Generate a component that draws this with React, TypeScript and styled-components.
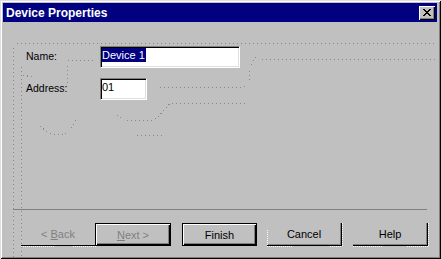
import React from 'react'
import styled, { createGlobalStyle } from 'styled-components'

const GlobalStyle = createGlobalStyle`
  html, body {
    margin: 0;
    padding: 0;
    background: #c0c0c0;
  }
  body {
    font-family: "Liberation Sans", Arial, sans-serif;
  }
`

export default function App () {
  return (
    <>
      <GlobalStyle />
      <Window>
        <TitleBar>
          <Title>Device Properties</Title>
          <CloseButton aria-label='Close'>
            <CloseGlyph />
          </CloseButton>
        </TitleBar>

        <Body>
          <FieldLabel>Name:</FieldLabel>
          <TextBox width={140}>
            <Selected>Device 1</Selected>
          </TextBox>
          <FieldLabel>Address:</FieldLabel>
          <TextBox width={47}>01</TextBox>
        </Body>

        <Separator />

        <ButtonRow>
          <Button look='flat' width={74} disabled>
            <Caption>&lt; <u>B</u>ack</Caption>
          </Button>
          <Button look='framed' width={76} gap={11} disabled>
            <Caption><u>N</u>ext &gt;</Caption>
          </Button>
          <Button look='framed' width={75} gap={10}>
            <Caption>Finish</Caption>
          </Button>
          <Button look='edge' width={75} gap={11}>
            <Caption>Cancel</Caption>
          </Button>
          <Button look='edge' width={75}>
            <Caption>Help</Caption>
          </Button>
        </ButtonRow>

        <Dots />
      </Window>
    </>
  )
}

const CloseGlyph = () => (
  <svg width='8' height='7' viewBox='0 0 8 7' shapeRendering='crispEdges'>
    <path
      fill='#000'
      d='M0 0h2v1H0zM6 0h2v1H6zM1 1h2v1H1zM5 1h2v1H5zM2 2h4v1H2zM3 3h2v1H3zM2 4h4v1H2zM1 5h2v1H1zM5 5h2v1H5zM0 6h2v1H0zM6 6h2v1H6z'
    />
  </svg>
)

// stray focus-dot traces left over in the capture
const greyTraces = [
  'M17 43.5 H434',
  'M13.5 48 V259',
  'M21.5 67 V259',
  'M23 75 L32 77',
  'M67.5 66 V84',
  'M68 60.5 H96',
  'M262 59.5 H437',
  'M256 57 L253 61 L249 70 L249 80 L245 86 L240 87.5 H158',
  'M40 126 Q48 134 58 135 Q70 135 76 120',
  'M117 115 L125 120.5 H153 L158 117 L170 103.5 H245',
  'M137 135.5 H162'
]

const whiteTraces = [
  'M21 246.5 H55',
  'M73 246.5 H97',
  'M267 246.5 H293',
  'M330 246.5 H342',
  'M353 246.5 H383',
  'M407 246.5 H429',
  'M267.5 230 V246',
  'M342.5 223 V246',
  'M428.5 223 V246'
]

const Dots = () => (
  <Overlay width='441' height='259' viewBox='0 0 441 259'>
    {greyTraces.map(d => (
      <path key={d} d={d} fill='none' stroke='#8a8a8a' strokeWidth='1' strokeDasharray='1 3' />
    ))}
    {whiteTraces.map(d => (
      <path key={d} d={d} fill='none' stroke='#ffffff' strokeWidth='1' strokeDasharray='1 1' />
    ))}
  </Overlay>
)

type ButtonLook = 'flat' | 'framed' | 'edge'

const looks: Record<ButtonLook, string> = {
  flat: `
    border-bottom: 1px solid #000;
  `,
  framed: `
    border: 1px solid #000;
    box-shadow: inset 1px 1px #fff, inset -1px -1px #000, inset -2px -2px #808080;
  `,
  edge: `
    border-right: 1px solid #000;
    border-bottom: 1px solid #000;
    box-shadow: inset -1px -1px #808080;
  `
}

const Window = styled.div`
  position: relative;
  box-sizing: border-box;
  width: 441px;
  height: 259px;
  padding: 3px;
  background: #c0c0c0;
  box-shadow:
    inset 1px 1px #dfdfdf,
    inset -1px -1px #000,
    inset 2px 2px #fff,
    inset -2px -2px #808080;
  display: flex;
  flex-direction: column;
  overflow: hidden;
`

const TitleBar = styled.div`
  height: 19px;
  margin-right: 1px;
  padding: 0 2px 0 3px;
  background: #000080;
  display: flex;
  align-items: center;
  justify-content: space-between;
`

const Title = styled.span`
  color: #fff;
  font-weight: bold;
  font-size: 12px;
  line-height: 14px;
`

const CloseButton = styled.div`
  box-sizing: border-box;
  width: 16px;
  height: 14px;
  background: #c0c0c0;
  box-shadow:
    inset 1px 1px #fff,
    inset -1px -1px #000,
    inset -2px -2px #808080;
  display: flex;
  align-items: center;
  justify-content: center;
  padding: 0 1px 1px 0;
`

const Body = styled.div`
  flex: 1;
  padding: 24px 0 0 23px;
  display: grid;
  grid-template-columns: 74px auto;
  grid-auto-rows: 22px;
  row-gap: 10px;
  align-content: start;
`

const FieldLabel = styled.div`
  align-self: start;
  margin-top: 4px;
  font-size: 10.5px;
  line-height: 12px;
  color: #000;
`

const TextBox = styled.div<{ width: number }>`
  box-sizing: border-box;
  width: ${p => p.width}px;
  height: 22px;
  background: #fff;
  border: 1px solid;
  border-color: #808080 #fff #fff #808080;
  box-shadow: inset 1px 1px #000, inset -1px -1px #dfdfdf;
  padding: 1px 1px 0 1px;
  font-size: 11px;
  line-height: 14px;
  color: #000;
  white-space: nowrap;
`

const Selected = styled.span`
  display: inline-block;
  background: #000080;
  color: #fff;
  padding: 0 1px 0 0;
`

const Separator = styled.div`
  height: 1px;
  margin: 0 11px 0 10px;
  background: #808080;
`

const ButtonRow = styled.div`
  display: flex;
  padding: 13px 0 10px 18px;
`

const Button = styled.div<{ look: ButtonLook, width: number, gap?: number, disabled?: boolean }>`
  box-sizing: border-box;
  width: ${p => p.width}px;
  height: 23px;
  margin-right: ${p => p.gap || 0}px;
  display: flex;
  align-items: center;
  justify-content: center;
  font-size: 11px;
  color: ${p => p.disabled ? '#808080' : '#000'};
  background: #c0c0c0;
  ${p => looks[p.look]}
`

const Caption = styled.span`
  white-space: pre;

  u {
    text-decoration: underline;
    text-underline-offset: 1px;
  }
`

const Overlay = styled.svg`
  position: absolute;
  left: 0;
  top: 0;
  pointer-events: none;
  shape-rendering: crispEdges;
`
